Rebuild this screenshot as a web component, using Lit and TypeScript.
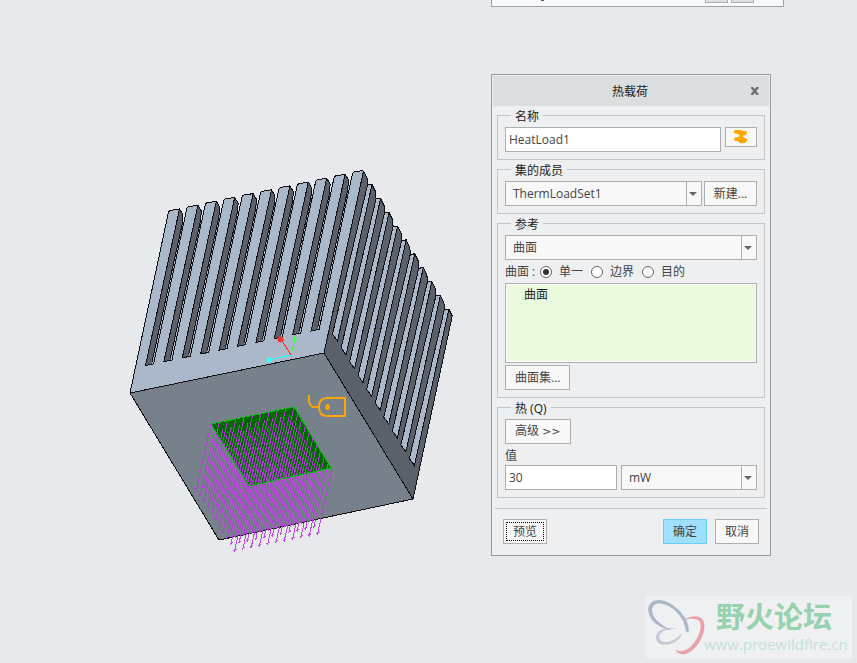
import { LitElement, html, svg, css } from "lit";
import { customElement, property } from "lit/decorators.js";

type Pt = [number, number];

const at = (p: Pt, d: Pt, n: number): Pt => [p[0] + d[0] * n, p[1] + d[1] * n];
const pts = (list: Pt[]) => list.map(([x, y]) => `${x.toFixed(1)},${y.toFixed(1)}`).join(" ");
const range = (n: number) => Array.from({ length: n }, (_, i) => i);

/* Step from one fin to the next along the front, and along the side. */
const FRONT: Pt = [18.4, -3.85];
const SIDE: Pt = [8.55, 13.85];

@customElement("heat-sink")
class HeatSink extends LitElement {
  static styles = css`
    :host { display: block; overflow: hidden; }
    .view { display: block; }
    .light { fill: #abb8ca; }
    .dark { fill: #5a616a; }
    .base { fill: #76818c; }
    .edge { stroke: #0c0e12; fill: none; }
    .patch { fill: #006600; stroke: #00b80a; }
    .flux { stroke: #b83cdc; stroke-opacity: 0.9; fill: none; }
    .tag { stroke: #ffa500; stroke-width: 2; fill: none; }
    .red { stroke: #ff3030; }
    .green { stroke: #40ff40; }
    .cyan { stroke: #30ffff; }
    .red-dot { fill: #ff3030; }
    .green-dot { fill: #40ff40; }
    .cyan-dot { fill: #30ffff; }
  `;

  private front() {
    const top: Pt[] = [];
    range(11).forEach((i) => {
      const s = (p: Pt) => at(p, FRONT, i);
      top.push(s([168.5, 212]), s([170, 210.5]), s([179.5, 209]));
      if (i < 10) top.push(s([183, 216]), s([183, 224]));
    });
    return svg`
      <polygon class="light" points=${pts([[130, 393], ...top, [324, 353]])} />
      ${range(10).map((i) => {
        const s = (...list: Pt[]) => pts(list.map((p) => at(p, FRONT, i)));
        return svg`
          <polygon class="dark" points=${s([179.5, 209], [183, 215], [182, 224], [152, 364], [145.5, 365.5])} />
          <polyline class="edge" points=${s([168.5, 212], [170, 210.5], [179.5, 209], [183, 215], [182, 225], [152, 362])} />
          <polyline class="edge" points=${s([179.5, 209], [145.5, 365.5], [153.5, 364], [186.9, 208.2])} />`;
      })}
      <polyline class="edge" points=${pts([at([168.5, 212], FRONT, 10), at([170, 210.5], FRONT, 10), at([179.5, 209], FRONT, 10)])} />`;
  }

  private side() {
    const sky: Pt[] = [];
    range(11).forEach((k) => {
      const s = (p: Pt) => at(p, SIDE, k);
      sky.push(s([363.5, 171]), s([367, 178]));
      if (k < 10) sky.push(s([367.5, 185]));
    });
    return svg`
      <polygon class="dark" points=${pts([[324, 353], ...sky, [413, 499]])} />
      ${range(10).map((k) => {
        const s = (...list: Pt[]) => pts(list.map((p) => at(p, SIDE, k)));
        return svg`
          <polygon class="light" points=${s([367.5, 185], [372, 184.5], [337.5, 341], [332.5, 334])} />
          <polyline class="edge" points=${s([367, 178], [367.5, 185], [332.5, 334], [337.5, 341], [372, 184.5], [367.5, 185])} />`;
      })}
      <polyline class="edge" points=${pts(sky)} />`;
  }

  private flux() {
    const start: Pt = [211, 424];
    let d = "";
    range(11).forEach((c) =>
      range(11).forEach((r) => {
        const [x, y] = at(at(start, [8.3, -1.7], c), [3.8, 6.2], r);
        d += `M${x.toFixed(1)} ${y.toFixed(1)}l-14.5 65l-1 -1m1 0l2 -1`;
      })
    );
    return svg`<path class="flux" d=${d} />`;
  }

  render() {
    return html`
      <svg class="view" width="491" height="600" viewBox="0 0 491 600" role="img" aria-label="散热器模型">
        <g shape-rendering="crispEdges">
          ${this.side()} ${this.front()}
          <polygon class="base" points="130,393 324,353 413,499 219,540" />
          <polyline class="edge" points="168.5,212 130,393 219,540 413,499 452,317" />
          <polyline class="edge" points="130,393 324,353 413,499" />
          <polyline class="edge" points="324,353 363.5,171" />
          <polygon class="patch" points="211,424 294,407 331,468 249,486" />
          ${this.flux()}
          <polyline class="edge patch" fill-opacity="0" points="211,424 294,407 331,468 249,486 211,424" />
          <line class="red" x1="291" y1="355" x2="281" y2="339" />
          <line class="green" x1="291" y1="355" x2="295" y2="339" />
          <line class="cyan" x1="291" y1="355" x2="269" y2="360" />
        </g>
        <circle class="red-dot" cx="280.5" cy="339.5" r="3" />
        <circle class="green-dot" cx="294.5" cy="338.5" r="2" />
        <circle class="cyan-dot" cx="269" cy="360" r="2.5" />
        <path class="tag" d="M309 395v6q0 4 4 6h6M319 407q0 -9 8 -9h18v18h-18q-8 0 -8 -9z" />
        <ellipse class="tag" cx="327.5" cy="407" rx="1.2" ry="2" />
      </svg>`;
  }
}

@customElement("forum-mark")
class ForumMark extends LitElement {
  static styles = css`
    :host { display: grid; grid-template-columns: 58px 1fr; height: 62px; background: #eff0f2; }
    .name { font: bold 29px/32px "Noto Sans CJK SC", sans-serif; color: #97d1ae; padding: 3px 0 3px 12px; }
    .site { font: 15px/20px "Open Sans", sans-serif; color: #c4dfe0; }
    .words { white-space: nowrap; }
  `;
  render() {
    return html`
      <svg width="58" height="62" viewBox="18 18 174 186" overflow="visible" aria-hidden="true">
        <path fill="#e9a0a8" d="M128 92C150 76 180 72 190 92C202 120 178 172 146 188C130 196 112 194 106 178C118 188 136 184 150 172C172 152 188 116 180 96C174 84 150 84 128 92Z" />
        <path fill="#c3ccd5" d="M112 116C84 108 52 118 48 140C46 160 66 168 88 163C110 157 124 142 126 128C116 142 100 152 84 155C66 158 56 150 58 138C62 122 86 115 112 116Z" />
        <path fill="#a9b8c6" d="M146 128C152 92 112 42 66 31C38 26 22 42 25 64C28 90 56 116 96 121C58 104 36 82 36 60C38 42 54 38 68 42C106 50 138 92 137 124Z" />
      </svg>
      <div class="words">
        <div class="name">野火论坛</div>
        <div class="site">www.proewildfire.cn</div>
      </div>`;
  }
}

@customElement("load-dialog")
class LoadDialog extends LitElement {
  @property() heading = "热载荷";

  static styles = css`
    :host { display: block; box-sizing: border-box; border: 1px solid #989a9c; background: #eeeff1; color: #444; }
    :host, button, input, select { font: 12px/16px "Open Sans", "Noto Sans CJK SC", sans-serif; }
    *, *::before, *::after { box-sizing: border-box; }
    .bar { display: flex; align-items: center; height: 30px; margin: 1px; padding-left: 22px; background: #dadedf; color: #222; }
    .title { flex: 1; margin: 0; padding-top: 2px; text-align: center; font: inherit; }
    .close { display: grid; place-items: center; width: 20px; height: 20px; margin-right: 4px; padding: 0; border: 0; background: none; }
    .body { display: grid; gap: 1px; padding: 0 5px; }
    .group { min-width: 0; margin: 0; padding: 3px 7px 7px; border: 1px solid #c3c5c7; }
    .legend { height: 17px; margin-left: 6px; padding: 2px 4px 0; color: #222; }
    .row { display: flex; align-items: flex-start; gap: 4px; }
    .tight { gap: 2px; }
    .text { flex: 1; min-width: 0; height: 25px; padding: 0 3px; border: 1px solid #acaeb0; border-radius: 0; background: #fff; color: #444; outline: 0; }
    .half { flex: 0 1 112px; }
    .btn { height: 25px; padding: 0 9px; border: 1px solid #acaeb0; border-radius: 0; background: #f8f8f8; color: #444; white-space: nowrap; }
    .more { font: 11px/16px "DejaVu Sans", sans-serif; }
    .swatch { display: grid; place-items: center; width: 32px; height: 20px; padding: 0 1px 1px 0; }
    .new { width: 53px; padding: 0; }
    .pick { position: relative; flex: 1; display: flex; min-width: 0; }
    .select { appearance: none; width: 100%; height: 25px; padding: 0 20px 0 7px; border: 1px solid #acaeb0; border-radius: 0; background: #f8f8f8; color: #444; }
    .pick::before { content: ""; position: absolute; right: 15px; top: 0; bottom: 0; width: 1px; background: #acaeb0; }
    .pick::after { content: ""; position: absolute; right: 5px; top: 11px; border: 4px solid transparent; border-top-color: #666; border-bottom: 0; pointer-events: none; }
    .radios { display: flex; align-items: center; height: 23px; padding-top: 1px; }
    .choice { display: flex; align-items: center; gap: 7px; margin-right: 8px; }
    .radio { appearance: none; display: grid; place-items: center; width: 12px; height: 12px; margin: 0; border: 1px solid #666; border-radius: 50%; background: #fff; }
    .radio:checked::before { content: ""; width: 6px; height: 6px; border-radius: 50%; background: #333; }
    .lead { width: 35px; }
    .list { height: 80px; margin: 0 0 2px; padding: 3px 18px; list-style: none; border: 1px solid #acaeb0; background: #eafbdd; box-shadow: inset 0 0 0 1px #fff; color: #222; }
    .caption { display: block; height: 21px; padding-top: 4px; }
    .foot { display: flex; gap: 8px; margin: 10px 3px 0; padding: 10px 8px 11px; border-top: 1px solid #c3c5c7; }
    .foot .btn { width: 44px; padding: 0; }
    .preview { margin-right: auto; outline: 1px dotted #000; outline-offset: -4px; }
    .foot .ok { border-color: #69cdfb; background: #a0e0ff; }
  `;

  render() {
    return html`
      <header class="bar">
        <h1 class="title">${this.heading}</h1>
        <button class="close" aria-label="关闭">
          <svg width="10" height="8" viewBox="0 0 10 8"><path d="M1.500 0L8 8M8 0L1.500 8" stroke="#6c6e74" stroke-width="2.400" /></svg>
        </button>
      </header>
      <div class="body">
        <fieldset class="group">
          <legend class="legend">名称</legend>
          <div class="row">
            <input class="text" aria-label="名称" value="HeatLoad1" />
            <button class="btn swatch" aria-label="颜色">
              <svg width="13" height="13" viewBox="0 0 13 13"><path fill="#ffa500" d="M1 0H7L8 1H12L13 3V4L9 6V7L13 9V11L11 13H5L4 11H1L0 9V8L4 7L6 6L4 4L0 3V1Z" /></svg>
            </button>
          </div>
        </fieldset>
        <fieldset class="group">
          <legend class="legend">集的成员</legend>
          <div class="row tight">
            <div class="pick"><select class="select" aria-label="集的成员"><option>ThermLoadSet1</option></select></div>
            <button class="btn new">新建...</button>
          </div>
        </fieldset>
        <fieldset class="group">
          <legend class="legend">参考</legend>
          <div class="pick"><select class="select" aria-label="参考"><option>曲面</option></select></div>
          <div class="radios" role="radiogroup" aria-label="曲面">
            <span class="lead">曲面 :</span>
            ${["单一", "边界", "目的"].map(
              (name, i) => html`<label class="choice"><input class="radio" type="radio" name="kind" ?checked=${i === 0} />${name}</label>`
            )}
          </div>
          <ul class="list" role="listbox" aria-label="曲面"><li role="option">曲面</li></ul>
          <button class="btn">曲面集...</button>
        </fieldset>
        <fieldset class="group">
          <legend class="legend">热 (Q)</legend>
          <button class="btn">高级 <span class="more">&gt;&gt;</span></button>
          <label class="caption" for="amount">值</label>
          <div class="row">
            <input class="text half" id="amount" value="30" />
            <div class="pick"><select class="select" aria-label="单位"><option>mW</option></select></div>
          </div>
        </fieldset>
      </div>
      <footer class="foot">
        <button class="btn preview">预览</button>
        <button class="btn ok">确定</button>
        <button class="btn">取消</button>
      </footer>`;
  }
}

@customElement("app-root")
class AppRoot extends LitElement {
  static styles = css`
    :host { display: block; position: relative; min-height: 100vh; background: #e8e9ed; }
    .desk { display: grid; grid-template-columns: minmax(0, 1fr) 366px; }
    .strip { display: flex; gap: 3px; box-sizing: border-box; width: 293px; height: 7px; padding: 0 29px 0 49px; border: 1px solid #a0a2a4; border-top: 0; background: #f8f9fb; }
    .stub { box-sizing: border-box; width: 23px; height: 3px; border: 1px solid #acaeb0; border-top: 0; background: #dfe0e2; }
    .speck { width: 3px; height: 1px; margin-right: auto; background: #555; }
    .dialog { width: 280px; margin-top: 67px; }
    .mark { position: absolute; right: 5px; bottom: 5px; width: 206px; }
  `;
  render() {
    return html`
      <main class="desk">
        <heat-sink></heat-sink>
        <div>
          <div class="strip"><span class="speck"></span><span class="stub"></span><span class="stub"></span></div>
          <load-dialog class="dialog"></load-dialog>
        </div>
      </main>
      <forum-mark class="mark"></forum-mark>`;
  }
}
